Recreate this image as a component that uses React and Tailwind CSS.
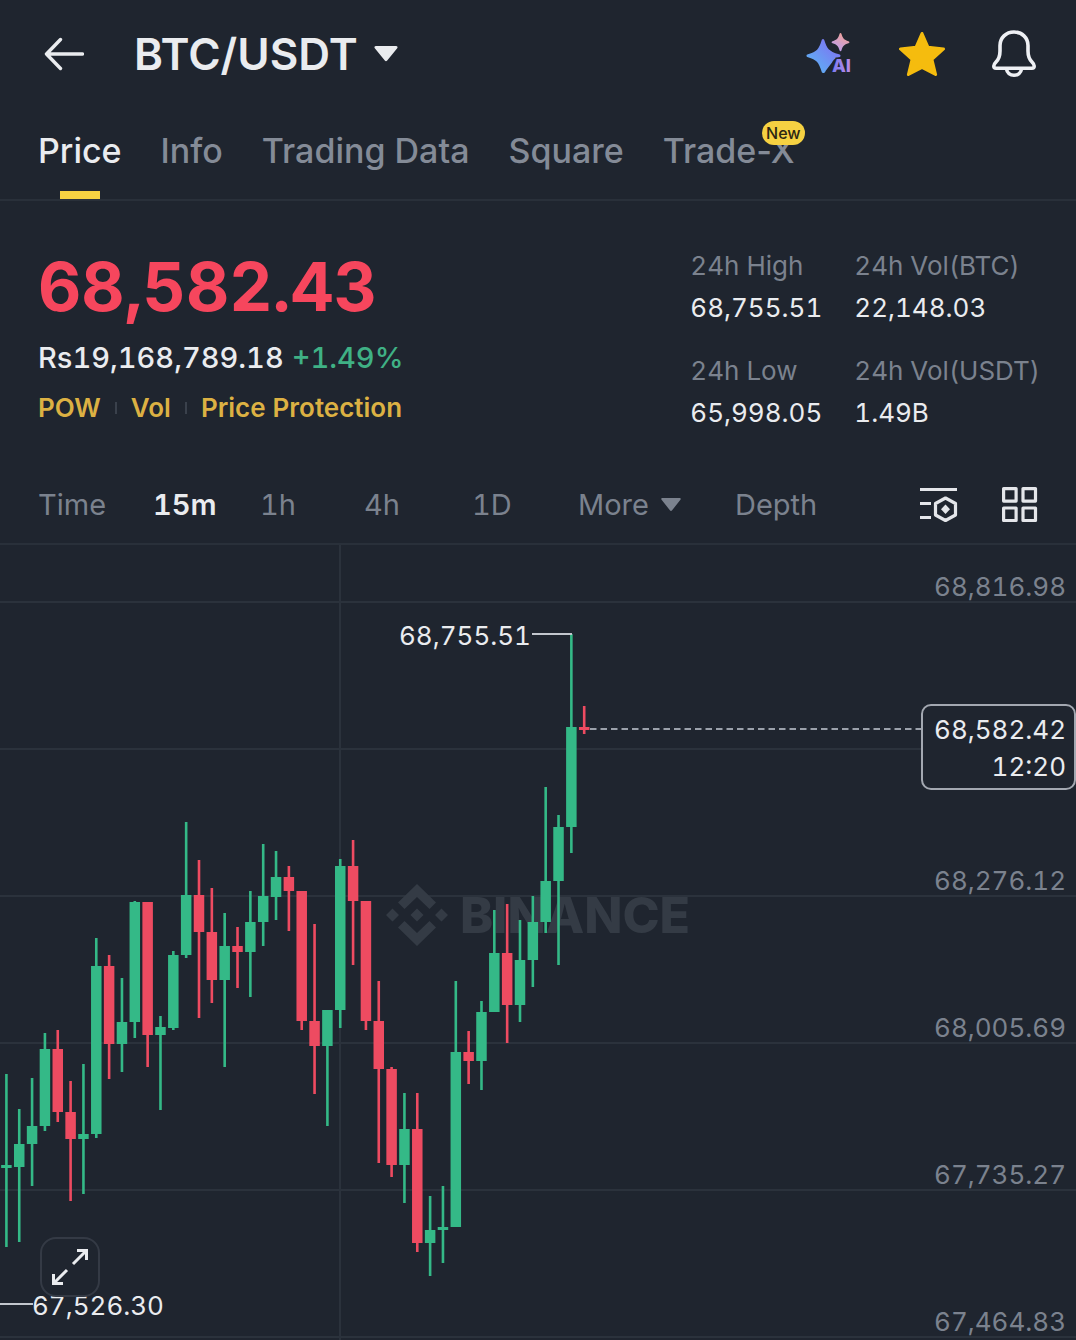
import clsx from "clsx";

const tabs = [
  { name: "Price", active: true },
  { name: "Info" },
  { name: "Trading Data" },
  { name: "Square" },
  { name: "Trade-X", badge: "New" },
];

const stats = [
  { label: "24h High", value: "68,755.51" },
  { label: "24h Vol(BTC)", value: "22,148.03" },
  { label: "24h Low", value: "65,998.05" },
  { label: "24h Vol(USDT)", value: "1.49B" },
];

const intervals = ["Time", "15m", "1h", "4h", "1D", "More", "Depth"];

const levels = [
  { price: "68,816.98", y: 57 },
  { price: "", y: 204 },
  { price: "68,276.12", y: 351 },
  { price: "68,005.69", y: 498 },
  { price: "67,735.27", y: 645 },
  { price: "67,464.83", y: 792 },
];

const STEP = 12.84;
const BODY = 10.5;

// [high, bodyTop, bodyBottom, low, up]
const candles = [
  [530, 621, 624, 703, 1],
  [565, 600, 623, 698, 1],
  [534, 582, 600, 642, 1],
  [489, 505, 582, 587, 1],
  [486, 505, 568, 578, 0],
  [537, 568, 595, 657, 0],
  [520, 590, 595, 650, 1],
  [394, 422, 590, 594, 1],
  [411, 422, 500, 535, 0],
  [434, 478, 500, 528, 1],
  [357, 358, 478, 494, 1],
  [358, 358, 491, 523, 0],
  [472, 483, 491, 566, 1],
  [407, 411, 484, 486, 1],
  [278, 351, 411, 414, 1],
  [316, 351, 388, 474, 0],
  [344, 388, 436, 459, 0],
  [369, 402, 436, 523, 1],
  [383, 402, 408, 444, 0],
  [347, 378, 408, 453, 1],
  [300, 352, 378, 402, 1],
  [307, 333, 353, 376, 1],
  [322, 333, 347, 387, 0],
  [347, 347, 477, 486, 0],
  [380, 477, 502, 550, 0],
  [466, 466, 502, 582, 1],
  [315, 322, 466, 484, 1],
  [296, 322, 357, 421, 0],
  [357, 357, 477, 486, 0],
  [437, 477, 525, 619, 0],
  [523, 525, 621, 633, 0],
  [549, 585, 621, 659, 1],
  [549, 585, 699, 708, 0],
  [652, 686, 699, 732, 1],
  [642, 683, 686, 719, 1],
  [437, 508, 683, 683, 1],
  [487, 508, 517, 540, 0],
  [457, 468, 517, 546, 1],
  [366, 409, 468, 468, 1],
  [360, 409, 461, 499, 0],
  [376, 416, 461, 478, 1],
  [352, 378, 416, 443, 1],
  [243, 337, 378, 389, 1],
  [271, 283, 337, 421, 1],
  [90, 183, 283, 309, 1],
  [162, 183, 186, 190, 0],
];

function Header() {
  return (
    <header className="flex h-[107px] items-center justify-between pr-10 pl-11">
      <div className="flex items-center">
        <button aria-label="Back">
          <svg width="40" height="34" viewBox="0 0 40 34" fill="none" stroke="#eaecef" strokeWidth="3.4" strokeLinecap="round" strokeLinejoin="round">
            <path d="M16.500 2.500 2.500 17l14 14.500M3 17H38.500" />
          </svg>
        </button>
        <button className="ml-[50px] flex items-center gap-4 text-[44px] leading-[50px] font-semibold">
          BTC/USDT
          <svg width="24" height="16" viewBox="0 0 24 16" fill="#eaecef">
            <path d="M2 0h20c1.500 0 2 1.200 1.200 2.200L13.200 14.600c-.7.900-1.700.900-2.400 0L.8 2.200C0 1.200.5 0 2 0z" />
          </svg>
        </button>
      </div>
      <div className="flex items-center gap-[47px]">
        <button aria-label="AI">
          <AiIcon />
        </button>
        <button aria-label="Favorite">
          <svg width="46" height="46" viewBox="0 0 46 46" fill="#f5bc0e" stroke="#f5bc0e" strokeWidth="3" strokeLinejoin="round">
            <path d="M23 2.500l6 13.800 15.500 1.700-11.600 10.300 3.700 15.200L23 36.500 9.400 43.500l3.700-15.200L1.500 18l15.500-1.700z" />
          </svg>
        </button>
        <button aria-label="Alerts">
          <svg width="44" height="48" viewBox="0 0 44 48" fill="none" stroke="#eef0f4" strokeWidth="3.600" strokeLinecap="round" strokeLinejoin="round">
            <path d="M22 2c-8 0-14 5.800-14 13.500V21c0 5-1.200 8.200-4 11-1.500 1.500-2.200 2.800-2.200 4 0 1.500.9 2.300 2.300 2.300h35.800c1.400 0 2.300-.8 2.300-2.300 0-1.200-.7-2.500-2.200-4-2.800-2.800-4-6-4-11v-5.500C36 7.800 30 2 22 2z" />
            <path d="M14.500 39c.6 3.900 3.600 6.300 7.500 6.300s6.900-2.400 7.500-6.300" />
          </svg>
        </button>
      </div>
    </header>
  );
}

function AiIcon() {
  return (
    <svg width="46" height="42" viewBox="0 0 46 42">
      <defs>
        <linearGradient id="spark" x1="0" y1="1" x2="1" y2="0">
          <stop offset="0.1" stopColor="#5cb4f4" />
          <stop offset="0.85" stopColor="#7d74f2" />
        </linearGradient>
        <linearGradient id="sparkle" x1="0" y1="1" x2="0.6" y2="0">
          <stop offset="0.1" stopColor="#b79cf2" />
          <stop offset="1" stopColor="#f0a29a" />
        </linearGradient>
        <linearGradient id="letters" x1="0" y1="0" x2="1" y2="0">
          <stop offset="0" stopColor="#7a7cf3" />
          <stop offset="1" stopColor="#bd8be6" />
        </linearGradient>
      </defs>
      <path fill="url(#spark)" d="M17 6c.9 0 1.200.8 1.500 1.700 2.400 7.500 4 10.400 14.500 13.600.9.300 1.500.7 1.500 1.400s-.6 1.200-1.500 1.500c-4 1.200-5.500 2.300-7 5.300l-6.300 8.200c-.5 1.500-1.200 2.300-2.700 2.300-.9 0-1.200-.8-1.500-1.700-2.700-9-5-11.700-13.500-14.100C1.100 23.900.5 23.500.5 22.700s.6-1.200 1.500-1.400C11 18.500 12.800 16.200 15.500 7.700c.3-.9.600-1.700 1.500-1.700z" />
      <path fill="url(#sparkle)" d="M34.500 0c.5 0 .8.500 1 1 1.300 4.300 2.500 5.700 7 7.300.5.200 1 .500 1 .900s-.5.800-1 1c-4.500 1.500-5.700 2.700-7 7-.2.500-.5 1-1 1s-.8-.5-1-1c-1.300-4.300-2.500-5.500-7-7-.5-.200-1-.6-1-1s.5-.7 1-.9c4.500-1.600 5.700-3 7-7.300.2-.5.5-1 1-1z" />
      <text x="26" y="39" fontFamily="Inter, sans-serif" fontWeight="800" fontSize="18" fill="url(#letters)" stroke="#1f252f" strokeWidth="3" paintOrder="stroke">
        AI
      </text>
    </svg>
  );
}

function Tabs() {
  return (
    <nav className="flex h-[94px] gap-[39px] border-b-2 border-[#29303a] pl-[38px] text-[34px] leading-[48px] font-medium">
      {tabs.map((tab) => (
        <button
          key={tab.name}
          className={clsx(
            "relative flex flex-col items-center pt-5",
            tab.active ? "text-[#eaecef]" : "text-[#848b97]"
          )}
        >
          {tab.name}
          {tab.active && <span className="mt-auto h-2 w-10 bg-[#f5d142]" />}
          {tab.badge && (
            <span className="absolute top-3.5 -right-2.5 rounded-full bg-[#f5d142] px-1 text-[16px] leading-6 text-[#2b2613]">
              {tab.badge}
            </span>
          )}
        </button>
      ))}
    </nav>
  );
}

function Summary() {
  return (
    <section className="flex justify-between pt-11 pr-9 pb-8 pl-[38px] tabular-nums">
      <div>
        <p className="text-[67px] leading-[84px] font-bold text-[#f6465d]">68,582.43</p>
        <p className="mt-1 flex gap-2 text-[29px] leading-[50px] font-medium">
          Rs19,168,789.18
          <span className="text-[#3fb185]">+1.49%</span>
        </p>
        <div className="flex items-center text-[26px] leading-[50px] font-semibold text-[#dcb143]">
          <a href="#pow">POW</a>
          <span className="mx-3.5 h-3 w-0.5 bg-[#3a414c]" />
          <a href="#vol">Vol</a>
          <span className="mx-3.5 h-3 w-0.5 bg-[#3a414c]" />
          <a href="#protection">Price Protection</a>
        </div>
      </div>
      <dl className="grid grid-cols-[auto_auto] gap-x-8 gap-y-[21px] text-[26px] leading-[42px]">
        {stats.map((stat) => (
          <div key={stat.label}>
            <dt className="text-[#7b828e]">{stat.label}</dt>
            <dd>{stat.value}</dd>
          </div>
        ))}
      </dl>
    </section>
  );
}

function Intervals() {
  return (
    <div className="flex h-[79px] items-center justify-between border-b-2 border-[#29303a] pr-[38px] pl-[38px]">
      <div className="grid grid-cols-[115px_107px_104px_108px_106px_157px_auto] text-[29px] leading-10 text-[#7b828e] tabular-nums">
        {intervals.map((name) => (
          <button
            key={name}
            className={clsx(
              "flex items-center gap-3",
              name === "15m" && "font-semibold text-[#eaecef]"
            )}
          >
            {name}
            {name === "More" && (
              <svg width="20" height="14" viewBox="0 0 20 14" fill="#7b828e">
                <path d="M1.500 0h17c1.200 0 1.600 1 .9 1.800l-8.300 10.500c-.6.800-1.600.8-2.200 0L.6 1.800C-.1 1 .3 0 1.500 0z" />
              </svg>
            )}
          </button>
        ))}
      </div>
      <div className="flex items-center gap-11">
        <button aria-label="Indicators">
          <svg width="38" height="36" viewBox="0 0 38 36" fill="none" stroke="#e4e6ea" strokeWidth="3.200">
            <path d="M0 2.500h37M0 16.500h11M0 30.500h11" />
            <path strokeLinejoin="round" d="M25.500 11l10 5.500v11.500l-10 5.500-10-5.500V16.500z" />
            <path fill="#e4e6ea" stroke="none" d="M25.500 17.500l4.500 4.700-4.500 4.700-4.500-4.700z" />
          </svg>
        </button>
        <button aria-label="Layout">
          <svg width="36" height="36" viewBox="0 0 36 36" fill="none" stroke="#e4e6ea" strokeWidth="3.200" strokeLinejoin="round">
            <path d="M1.600 1.600h12.500v12.500H1.600zM21 1.600h12.500v12.500H21zM1.600 21h12.500v12.500H1.600zM21 21h12.500v12.500H21z" />
          </svg>
        </button>
      </div>
    </div>
  );
}

function Watermark() {
  return (
    <div className="absolute inset-x-0 top-[339px] flex items-center justify-center gap-3 text-[50px] leading-[62px] font-extrabold text-[#343b45]">
      <svg width="62" height="62" viewBox="0 0 62 62" fill="currentColor">
        <path d="M31 0l19 18.500-6.500 6.500L31 13 18.500 25 12 18.500zM31 62l19-18.500-6.500-6.500L31 49 18.500 37 12 43.500zM6.500 24.500L13 31l-6.500 6.500L0 31zM55.500 24.500L62 31l-6.500 6.500L49 31zM31 24.500l6.500 6.500-6.500 6.500-6.500-6.500z" />
      </svg>
      BINANCE
    </div>
  );
}

function Candles() {
  return (
    <svg className="absolute inset-0 h-full w-full">
      {candles.map(([high, top, bottom, low, up], i) => {
        const x = 6.4 + i * STEP;
        return (
          <g key={i} fill={up ? "#34b987" : "#ee4b61"}>
            <rect x={x - 1.3} y={high - 1} width="2.6" height={low - high} />
            <rect x={x - BODY / 2} y={top - 1} width={BODY} height={bottom - top} />
          </g>
        );
      })}
      <path d="M532 89h40M0 759h33" stroke="#c3c7ce" strokeWidth="2" />
      <line x1="590" x2="100%" y1="184" y2="184" stroke="#9ba1ab" strokeWidth="2" strokeDasharray="6.500 4" />
    </svg>
  );
}

function Chart() {
  return (
    <section className="relative h-[795px] overflow-hidden text-[26px] leading-8 tabular-nums">
      <svg className="absolute inset-0 h-full w-full" stroke="#2b323c" strokeWidth="2">
        {levels.map(({ y }) => (
          <line key={y} x1="0" x2="100%" y1={y} y2={y} />
        ))}
        <line x1="340" x2="340" y1="0" y2="100%" />
      </svg>
      <Watermark />
      <Candles />
      {levels.map(({ price, y }) => (
        <span key={y} className="absolute right-2.5 text-[#7b828e]" style={{ top: y - 31 }}>
          {price}
        </span>
      ))}
      <span className="absolute top-[75px] left-[399px]">68,755.51</span>
      <span className="absolute top-[745px] left-8">67,526.30</span>
      <div className="absolute top-[159px] right-0 w-[155px] rounded-[10px] border-2 border-[#a3a8b1] bg-[#1f252f] pt-[5px] pr-2 pb-[3px] text-right leading-[37px]">
        <p>68,582.42</p>
        <p>12:20</p>
      </div>
      <button
        aria-label="Full screen"
        className="absolute top-[692px] left-10 flex size-15 items-center justify-center rounded-2xl border-2 border-[#343a45]"
      >
        <svg width="38" height="38" viewBox="0 0 38 38" fill="none" stroke="#eaecef" strokeWidth="3">
          <path d="M22 16L35 3M26 2.500h9.500V12M16 22L3 35M2.500 26v9.500H12" />
        </svg>
      </button>
    </section>
  );
}

function App() {
  return (
    <main className="min-h-screen bg-[#1f252f] font-['Inter',sans-serif] text-[#eaecef]">
      <Header />
      <Tabs />
      <Summary />
      <Intervals />
      <Chart />
    </main>
  );
}

export default App;
